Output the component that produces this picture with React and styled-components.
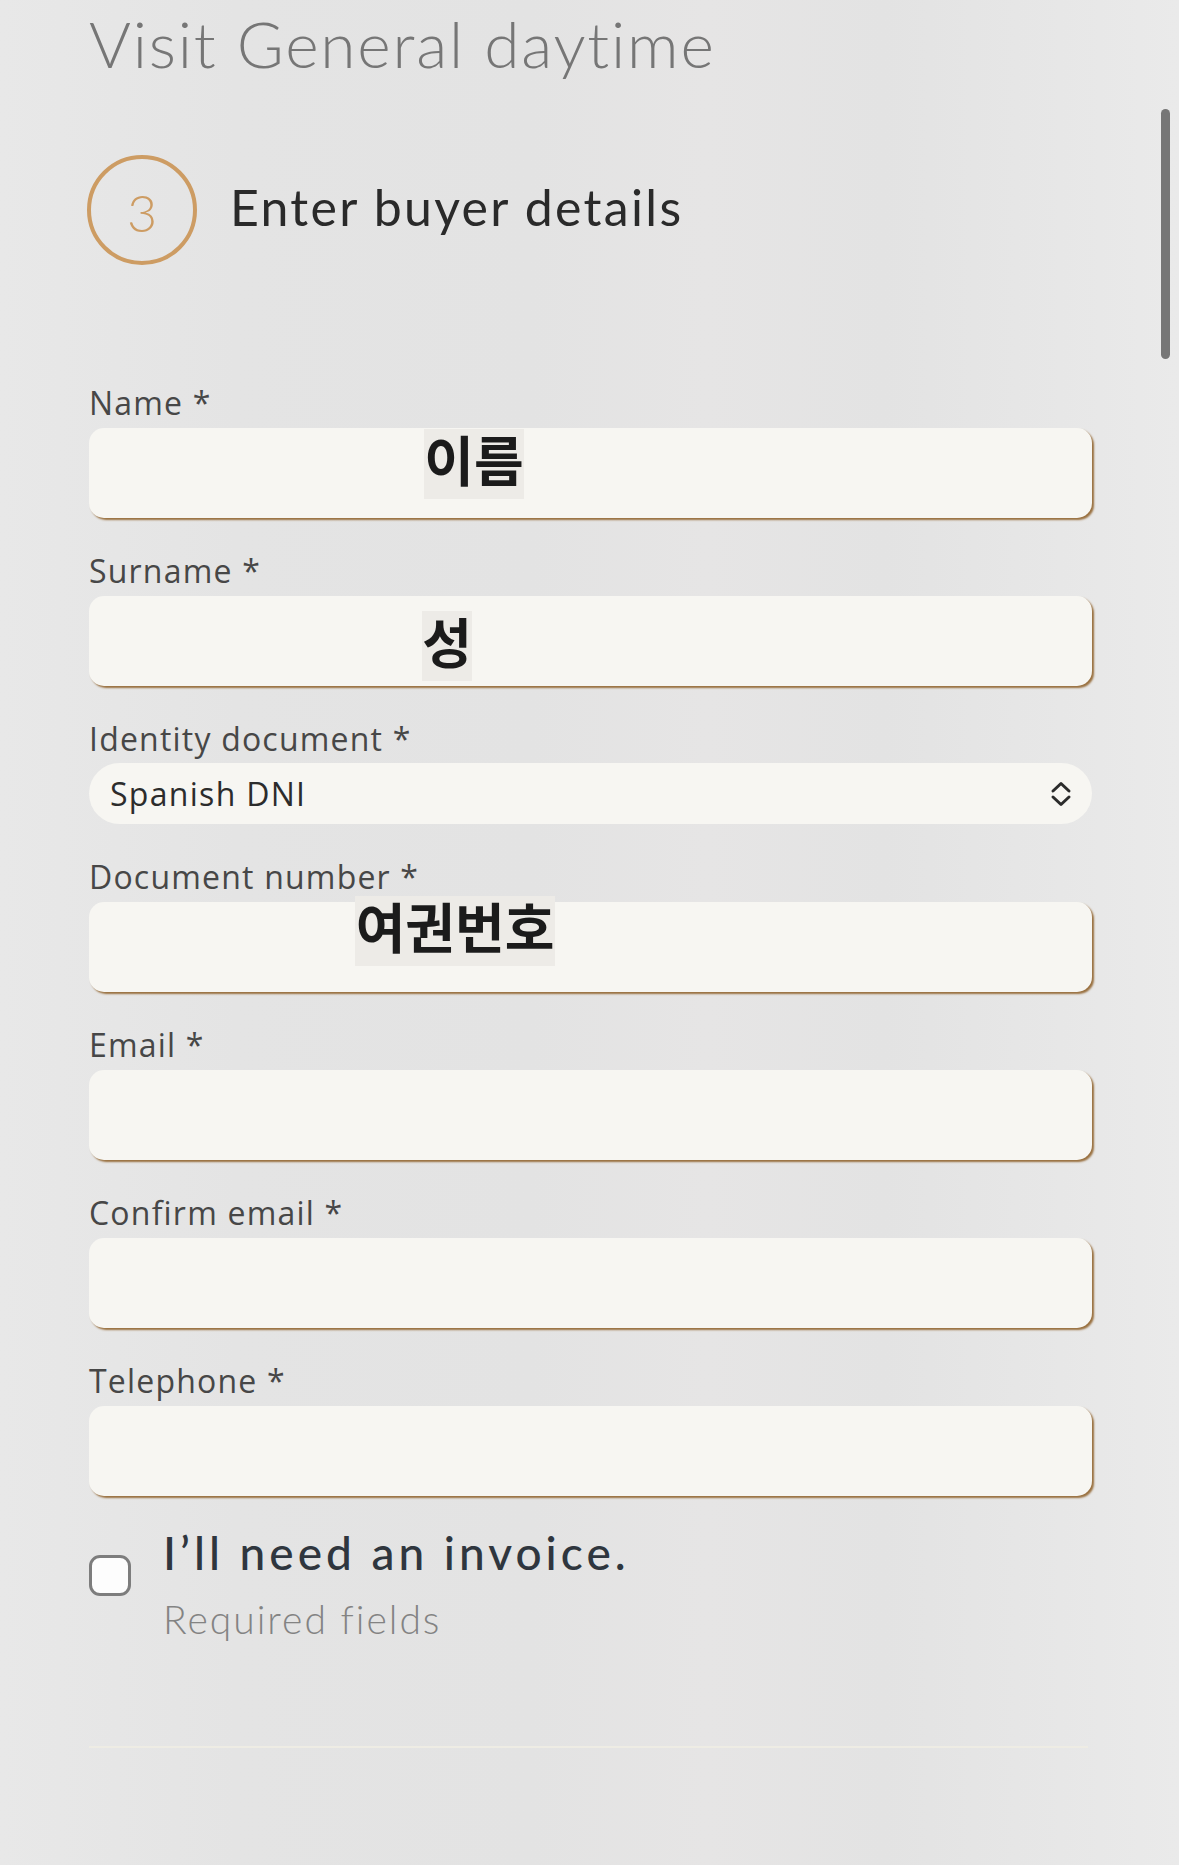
import React from 'react';
import styled, { createGlobalStyle } from 'styled-components';

const GlobalStyle = createGlobalStyle`
  html, body {
    margin: 0;
    padding: 0;
  }
  body {
    background: linear-gradient(
      90deg,
      #e8e8e8 0%,
      #e4e4e4 20%,
      #e3e3e3 45%,
      #e6e5e5 60%,
      #e3e3e3 75%,
      #e7e7e7 90%,
      #eaeaea 100%
    );
    min-height: 1865px;
    overflow: hidden;
  }
`;

const Page = styled.main`
  position: relative;
  width: 1179px;
  height: 1865px;
  box-sizing: border-box;
  padding: 0 87px 0 89px;
  font-family: 'Open Sans', 'Noto Sans', sans-serif;
  font-variant-ligatures: none;
`;

const Title = styled.h1`
  margin: 0;
  padding-top: 6px;
  font-family: Lato, 'Open Sans', sans-serif;
  font-weight: 300;
  font-size: 64px;
  line-height: 76px;
  letter-spacing: 1.8px;
  color: #767676;
`;

const StepHead = styled.div`
  display: flex;
  align-items: center;
  gap: 33px;
  margin-top: 73px;
  margin-left: -2px;
`;

const StepBadge = styled.div`
  width: 110px;
  height: 110px;
  box-sizing: border-box;
  border: 4px solid #cd9c63;
  border-radius: 50%;
  display: flex;
  align-items: center;
  justify-content: center;
  color: #cd9c63;
  font-family: Lato, sans-serif;
  font-weight: 300;
  font-size: 52px;
  line-height: 1;
  padding-top: 4px;
`;

const StepTitle = styled.h2`
  margin: 0;
  font-family: Lato, 'Open Sans', sans-serif;
  font-weight: 400;
  font-size: 50px;
  line-height: 60px;
  letter-spacing: 2.3px;
  color: #2a2a2a;
  padding-bottom: 6px;
`;

const Form = styled.form`
  display: flex;
  flex-direction: column;
  gap: 33px;
  margin-top: 118px;
  width: 1003px;
`;

const Field = styled.div`
  display: flex;
  flex-direction: column;
  gap: ${p => p.$gap ?? 5}px;
`;

const Label = styled.label`
  font-size: 32px;
  line-height: 40px;
  color: #474747;
  letter-spacing: 1.2px;
`;

const InputBox = styled.div`
  position: relative;
  height: 90px;
  background: #f7f6f2;
  border-radius: 15px;
  box-shadow: 2px 2px 2px #99703f;
`;

const Overlay = styled.span`
  position: absolute;
  left: ${p => p.$x}px;
  top: ${p => p.$y}px;
  width: ${p => p.$w}px;
  height: 70px;
  padding-bottom: 6px;
  box-sizing: border-box;
  background: #edebe7;
  font-family: 'Noto Sans CJK KR', sans-serif;
  font-weight: 700;
  font-size: 54px;
  line-height: 60px;
  text-align: center;
  white-space: nowrap;
  color: #1b1b1b;
`;

const Select = styled.div`
  height: 61px;
  background: #f7f6f2;
  border-radius: 31px;
  display: flex;
  align-items: center;
  justify-content: space-between;
  padding: 0 19px 0 21px;
  font-size: 32px;
  letter-spacing: 1.3px;
  color: #2c2c2c;
`;

const CheckRow = styled.div`
  display: flex;
  gap: 32px;
  margin-top: 29px;
`;

const Checkbox = styled.span`
  flex: none;
  width: 42px;
  height: 41px;
  box-sizing: border-box;
  margin-top: 30px;
  border: 3.5px solid #7d7d7d;
  border-radius: 11px;
  background: #fdfdfd;
`;

const CheckText = styled.div`
  display: flex;
  flex-direction: column;
`;

const Invoice = styled.div`
  font-family: Lato, sans-serif;
  font-weight: 500;
  font-size: 46px;
  line-height: 56px;
  letter-spacing: 4px;
  color: #2f363e;
`;

const Note = styled.div`
  margin-top: 14px;
  font-family: Lato, sans-serif;
  font-weight: 300;
  font-size: 39px;
  line-height: 48px;
  letter-spacing: 2px;
  color: #838383;
`;

const Divider = styled.hr`
  margin: 103px 0 0;
  width: 999px;
  border: none;
  height: 2px;
  background: #eeece4;
`;

const ScrollThumb = styled.div`
  position: absolute;
  top: 109px;
  left: 1161px;
  width: 9px;
  height: 250px;
  border-radius: 5px;
  background: #767676;
`;

const UpDown = () => (
  <svg width="24" height="28" viewBox="0 0 24 28" fill="none" stroke="#2b2b2b" strokeWidth="3" strokeLinecap="round" strokeLinejoin="round">
    <path d="M4 11 L12 3.5 L20 11" />
    <path d="M4 17 L12 24.5 L20 17" />
  </svg>
);

const fields = [
  { label: 'Name *', overlay: { text: '이름', x: 335, y: 1, w: 100 } },
  { label: 'Surname *', overlay: { text: '성', x: 333, y: 15, w: 50 } },
  { label: 'Identity document *', select: 'Spanish DNI' },
  { label: 'Document number *', overlay: { text: '여권번호', x: 266, y: -6, w: 200 } },
  { label: 'Email *' },
  { label: 'Confirm email *' },
  { label: 'Telephone *' },
];

const App = () => (
  <Page>
    <GlobalStyle />
    <Title>Visit General daytime</Title>
    <StepHead>
      <StepBadge>3</StepBadge>
      <StepTitle>Enter buyer details</StepTitle>
    </StepHead>

    <Form>
      {fields.map(f =>
        f.select ? (
          <Field key={f.label} $gap={4}>
            <Label>{f.label}</Label>
            <Select>
              <span>{f.select}</span>
              <UpDown />
            </Select>
          </Field>
        ) : (
          <Field key={f.label}>
            <Label>{f.label}</Label>
            <InputBox>
              {!!f.overlay && (
                <Overlay $x={f.overlay.x} $y={f.overlay.y} $w={f.overlay.w}>
                  {f.overlay.text}
                </Overlay>
              )}
            </InputBox>
          </Field>
        )
      )}
    </Form>

    <CheckRow>
      <Checkbox />
      <CheckText>
        <Invoice>I’ll need an invoice.</Invoice>
        <Note>Required fields</Note>
      </CheckText>
    </CheckRow>

    <Divider />
    <ScrollThumb />
  </Page>
);

export default App;
